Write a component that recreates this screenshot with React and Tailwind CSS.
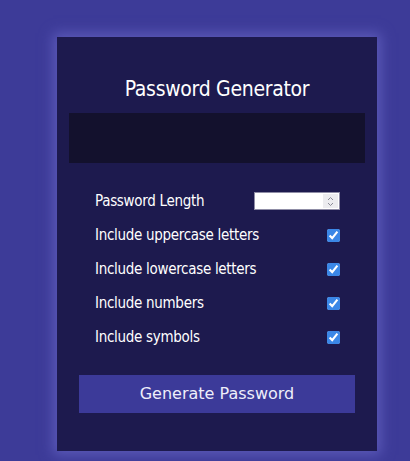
import { useState } from 'react'

const options = [
  { id: 'upper', label: 'Include uppercase letters' },
  { id: 'lower', label: 'Include lowercase letters' },
  { id: 'numbers', label: 'Include numbers' },
  { id: 'symbols', label: 'Include symbols' },
]

export default function App() {
  const [checked, setChecked] = useState({ upper: true, lower: true, numbers: true, symbols: true })

  return (
    <div className="min-h-screen bg-[#3d3b98] pt-[37px] pl-[57px]">
      <div className="w-[320px] bg-[#1d1a4e] px-3 pt-[38px] pb-[38px] shadow-[0_0_12px_4px_#5b59b8]">
        <h1 className="text-center text-white text-[21px] font-normal font-['DejaVu_Sans_Condensed','DejaVu_Sans',sans-serif] tracking-[-0.3px] leading-[28px]">
          Password Generator
        </h1>
        <div className="mt-[10px] h-[50px] bg-[#13112d]" />

        <div className="mt-[29px] pl-[26px] pr-[25px] font-['DejaVu_Sans_Condensed','DejaVu_Sans',sans-serif] text-[15px] tracking-[-0.3px] text-white">
          <div className="flex items-center justify-between h-[18px]">
            <label htmlFor="len">Password Length</label>
            <div className="relative">
              <input
                id="len"
                type="number"
                className="block w-[86px] h-[18px] bg-white border border-[#8f8da6] text-black text-xs"
              />
              <div className="absolute right-[2px] top-[2px] w-[15px] h-[14px] bg-[#ececef] flex items-center justify-center pointer-events-none">
                <svg width="7" height="11" viewBox="0 0 7 11" fill="none" stroke="#8a8a96" strokeWidth="1">
                  <path d="M1 4 L3.5 1.5 L6 4" />
                  <path d="M1 7 L3.5 9.5 L6 7" />
                </svg>
              </div>
            </div>
          </div>
          {options.map((o) => (
            <div key={o.id} className="flex items-center justify-between mt-[16px] h-[18px]">
              <label htmlFor={o.id}>{o.label}</label>
              <input
                id={o.id}
                type="checkbox"
                checked={checked[o.id]}
                onChange={() => setChecked({ ...checked, [o.id]: !checked[o.id] })}
                className="w-[13px] h-[13px] m-0 accent-[#3b87e6]"
              />
            </div>
          ))}
        </div>

        <div className="mt-[29px] flex justify-center">
          <button className="w-[276px] h-[38px] bg-[#3c3a99] text-[#eeeefa] text-[16px] font-['DejaVu_Sans',sans-serif]">
            Generate Password
          </button>
        </div>
      </div>
    </div>
  )
}
